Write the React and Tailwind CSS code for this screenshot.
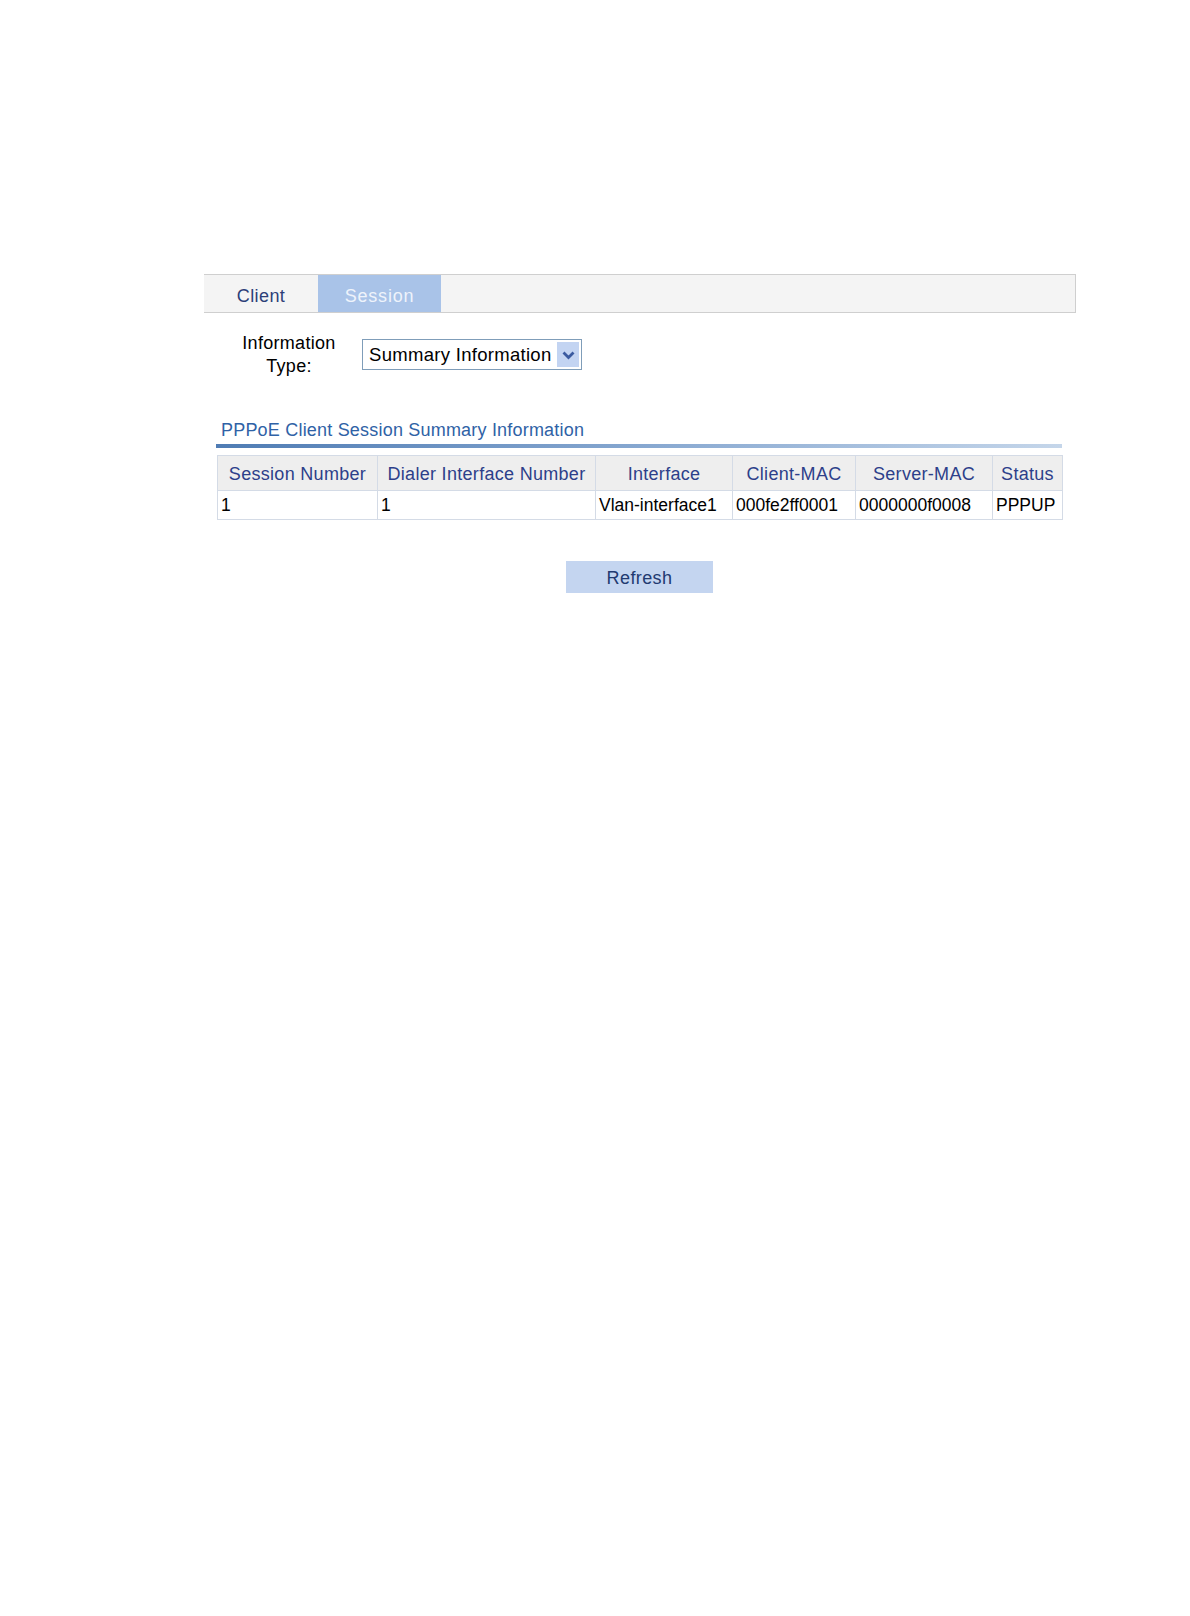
const columns = [
  { label: "Session Number", width: "w-[160px]", value: "1" },
  { label: "Dialer Interface Number", width: "w-[218px]", value: "1" },
  { label: "Interface", width: "w-[137px]", value: "Vlan-interface1" },
  { label: "Client-MAC", width: "w-[123px]", value: "000fe2ff0001" },
  { label: "Server-MAC", width: "w-[137px]", value: "0000000f0008" },
  { label: "Status", width: "w-[70px]", value: "PPPUP" },
];

export default function App() {
  return (
    <div className="min-h-[1616px] w-[1190px] bg-white pt-[274px] pl-[204px] font-['Liberation_Sans',Arial,sans-serif] text-[18px]">
      {/* tabs */}
      <div className="flex h-[39px] w-[872px] border border-l-0 border-[#cfcfcf] bg-[#f4f4f4]">
        <div className="flex w-[114px] items-center justify-center pt-[6px] tracking-[0.4px] text-[#2d3f78]">Client</div>
        <div className="flex w-[123px] items-center justify-center bg-[#a9c3e8] pt-[6px] tracking-[0.8px] text-[#eef3fb]">Session</div>
      </div>

      {/* information type */}
      <div className="mt-[19px] flex items-start">
        <div className="w-[158px] pl-[12px] text-center leading-[23px] tracking-[0.3px] text-black">
          Information
          <br />
          Type:
        </div>
        <div className="mt-[7px] flex h-[31px] w-[220px] items-center justify-between border border-[#7f9db9] bg-white pl-[6px] pr-[2px]">
          <span className="text-[18.5px] tracking-[0.3px] text-black">Summary Information</span>
          <div className="flex h-[25px] w-[22px] items-center justify-center bg-[#c3d4f2]">
            <svg width="13" height="10" viewBox="0 0 13 10">
              <path d="M1.5 2.5 L6.5 7.5 L11.5 2.5" fill="none" stroke="#3a5aa0" strokeWidth="2.8" />
            </svg>
          </div>
        </div>
      </div>

      {/* section title */}
      <div className="mt-[41px] ml-[12px] w-[846px]">
        <div className="pl-[5px] leading-[22px] tracking-[0.2px] text-[#2f62a6]">PPPoE Client Session Summary Information</div>
        <div className="mt-[3px] h-[4px] bg-gradient-to-r from-[#4f7cb4] via-[#86a7d0] to-[#c5d6ea]" />
      </div>

      {/* table */}
      <table className="mt-[7px] ml-[13px] border-collapse border border-[#b7c8e0]">
        <thead>
          <tr className="h-[35px] bg-[#eeeeee]">
            {columns.map((c) => (
              <th
                key={c.label}
                className={`${c.width} border border-[#d4dbe6] px-[2px] pt-[2px] text-center font-normal tracking-[0.3px] text-[#2d3f8a]`}
              >
                {c.label}
              </th>
            ))}
          </tr>
        </thead>
        <tbody>
          <tr className="h-[29px] bg-white">
            {columns.map((c) => (
              <td key={c.label} className="border border-[#d4dbe6] px-[3px] text-left text-[17.5px] text-black">
                {c.value}
              </td>
            ))}
          </tr>
        </tbody>
      </table>

      {/* refresh */}
      <div className="mt-[41px] ml-[362px]">
        <button className="h-[32px] w-[147px] bg-[#c4d5f0] pt-[3px] tracking-[0.4px] text-[#223a70]">Refresh</button>
      </div>
    </div>
  );
}
